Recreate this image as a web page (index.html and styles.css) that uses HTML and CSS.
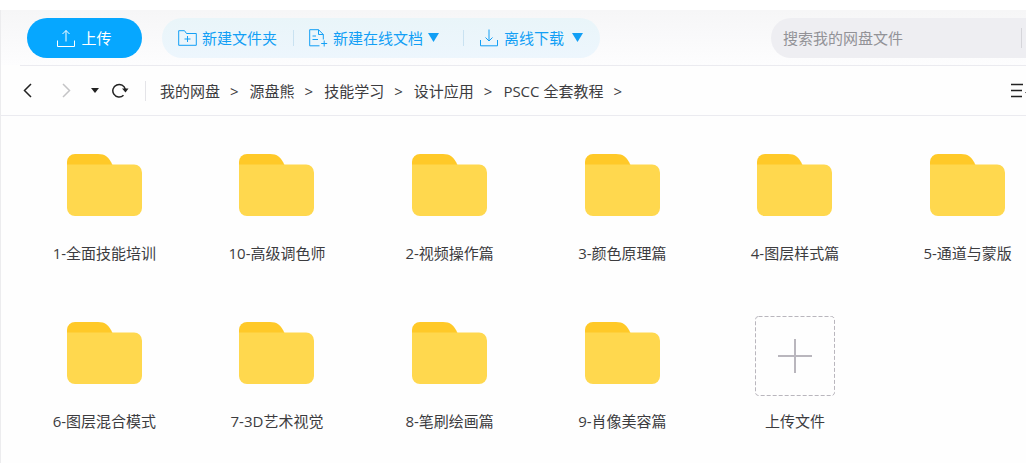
FILE: index.html
```html
<!DOCTYPE html>
<html lang="zh-CN">
<head>
  <meta charset="UTF-8" />
  <meta name="viewport" content="width=device-width, initial-scale=1.0"/>
  <title>我的网盘</title>
  <link rel="stylesheet" href="styles.css">
</head>
<body>
  <!-- Shared folder shape -->
  <svg class="defs" aria-hidden="true">
    <symbol id="folder" viewBox="0 0 75 62">
      <path fill="#ffc928" d="M0 30V8a8 8 0 0 1 8-8h23c7 0 11 3 14.500 11v19z"/>
      <path fill="#ffd84e" d="M0 10.500H67a8 8 0 0 1 8 8V54a8 8 0 0 1-8 8H8a8 8 0 0 1-8-8z"/>
    </symbol>
  </svg>

  <div class="app">
    <header class="toolbar">
      <button class="upload" type="button">
        <svg width="18" height="18" viewBox="0 0 18 18"><path d="M9 12.500V1.500M5.500 5L9 1.500 12.500 5M.5 11.500V17.500H17.500V11.500"/></svg>
        上传
      </button>
      <div class="actions">
        <button class="action" type="button">
          <svg width="19" height="16" viewBox="0 0 19 16"><path d="M.7 15.300V.7H6.500L8.500 3.500H18.300V15.300zM9.500 6V12M6.500 9H12.500"/></svg>
          新建文件夹
        </button>
        <span class="divider"></span>
        <button class="action" type="button">
          <svg width="19" height="18" viewBox="0 0 19 18"><path d="M10.500 16.800H.7V.7H9.500L14.300 5.500V10.500M9.500 .7V5.500H14.300M3.500 7H7M3.500 10.500H9M15.200 11.500V17.500M12.200 14.500H18.200"/></svg>
          新建在线文档
          <svg class="arrow" width="11" height="9" viewBox="0 0 11 9"><path d="M0 0H11L5.500 9z"/></svg>
        </button>
        <span class="divider wide"></span>
        <button class="action offline" type="button">
          <svg width="18" height="18" viewBox="0 0 18 18"><path d="M9 .5V12M5.500 8.500L9 12 12.500 8.500M.5 11V16.800H17.500V11"/></svg>
          离线下载
          <svg class="arrow" width="11" height="9" viewBox="0 0 11 9"><path d="M0 0H11L5.500 9z"/></svg>
        </button>
      </div>
      <form class="search">
        <input type="search" placeholder="搜索我的网盘文件" aria-label="搜索我的网盘文件">
        <button type="submit" aria-label="搜索"></button>
      </form>
    </header>
    <hr class="line">

    <nav class="pathbar">
      <button class="nav-btn back" type="button" aria-label="后退">
        <svg width="9" height="15" viewBox="0 0 9 15"><path d="M8 1L1.500 7.500 8 14"/></svg>
      </button>
      <button class="nav-btn forward" type="button" aria-label="前进">
        <svg width="9" height="15" viewBox="0 0 9 15"><path d="M1 1L7.500 7.500 1 14"/></svg>
      </button>
      <button class="nav-btn history" type="button" aria-label="历史">
        <svg width="8" height="5" viewBox="0 0 8 5"><path d="M0 0H8L4 5z"/></svg>
      </button>
      <button class="nav-btn refresh" type="button" aria-label="刷新">
        <svg width="17" height="15" viewBox="0 0 17 15"><path d="M11.500 12.300A6.300 6.300 0 1 1 13.300 6.500"/><path class="tip" d="M10 5.500H16.500L13.500 9.500z"/></svg>
      </button>
      <ol class="crumbs">
        <li><a href="#">我的网盘</a></li>
        <li><a href="#">源盘熊</a></li>
        <li><a href="#">技能学习</a></li>
        <li><a href="#">设计应用</a></li>
        <li><a href="#">PSCC 全套教程</a></li>
      </ol>
      <button class="nav-btn sort" type="button" aria-label="排序">
        <svg width="21" height="15" viewBox="0 0 21 15"><path d="M0 1.500H12M0 7.500H11M0 13.500H11"/><path class="tip" d="M14 9H20L17 13z"/></svg>
      </button>
    </nav>

    <main class="files">
      <a class="file" href="#"><svg class="folder"><use href="#folder"/></svg><span>1-全面技能培训</span></a>
      <a class="file" href="#"><svg class="folder"><use href="#folder"/></svg><span>10-高级调色师</span></a>
      <a class="file" href="#"><svg class="folder"><use href="#folder"/></svg><span>2-视频操作篇</span></a>
      <a class="file" href="#"><svg class="folder"><use href="#folder"/></svg><span>3-颜色原理篇</span></a>
      <a class="file" href="#"><svg class="folder"><use href="#folder"/></svg><span>4-图层样式篇</span></a>
      <a class="file" href="#"><svg class="folder"><use href="#folder"/></svg><span>5-通道与蒙版</span></a>
      <a class="file" href="#"><svg class="folder"><use href="#folder"/></svg><span>6-图层混合模式</span></a>
      <a class="file" href="#"><svg class="folder"><use href="#folder"/></svg><span>7-3D艺术视觉</span></a>
      <a class="file" href="#"><svg class="folder"><use href="#folder"/></svg><span>8-笔刷绘画篇</span></a>
      <a class="file" href="#"><svg class="folder"><use href="#folder"/></svg><span>9-肖像美容篇</span></a>
      <button class="file" type="button">
        <svg class="add" width="80" height="80" viewBox="0 0 80 80"><rect x=".5" y=".5" width="79" height="79" rx="3"/><path d="M40 23V57M23 40H57"/></svg>
        <span>上传文件</span>
      </button>
    </main>
  </div>
</body>
</html>
```
FILE: styles.css
```css
* {
  box-sizing: border-box;
}
body {
  margin: 0;
  padding-top: 10px;
  overflow: hidden;
  background: #fff;
  color: #3c3c3f;
  font-family: "Open Sans", "Noto Sans CJK SC", sans-serif;
  font-size: 15px;
  line-height: 20px;
}
button {
  margin: 0;
  padding: 0;
  border: none;
  background: none;
  color: inherit;
  font: inherit;
  cursor: pointer;
}
a {
  color: inherit;
  text-decoration: none;
}
svg {
  flex: none;
  fill: none;
  stroke: currentColor;
}
.defs {
  position: absolute;
  width: 0;
  height: 0;
}
/* The window is wider than the view, its right edge runs out of sight */
.app {
  min-height: calc(100vh - 10px);
  margin-right: -28px;
  border-left: 1px solid #ececee;
  background: #fefefe;
}

/* Top toolbar */
.toolbar {
  display: flex;
  align-items: center;
  height: 55px;
  padding-left: 26px;
  background: linear-gradient(#f6f6f7, #fdfdfe);
}
.line {
  height: 1px;
  margin: 0 0 0 19px;
  border: none;
  background: #ebebf0;
}
.upload {
  display: flex;
  align-items: center;
  justify-content: center;
  gap: 6px;
  width: 115px;
  height: 40px;
  border-radius: 20px;
  background: #06a7ff;
  color: #fff;
}
.actions {
  display: flex;
  align-items: center;
  height: 40px;
  margin-left: 20px;
  padding: 0 17px 0 16px;
  border-radius: 20px;
  background: linear-gradient(#e9f5f9, #edf6fd);
  color: #129ff5;
}
.action {
  display: flex;
  align-items: center;
  gap: 5px;
}
.arrow {
  fill: currentColor;
  stroke: none;
}
.offline {
  gap: 6px;
}
.offline .arrow {
  margin-left: 2px;
}
.divider {
  width: 1px;
  height: 16px;
  margin: 0 15px 0 16px;
  background: #c9e2f1;
}
.divider.wide {
  margin: 0 16px 0 24px;
}
.search {
  display: flex;
  align-items: center;
  width: 283px;
  height: 40px;
  margin-left: auto;
  border-radius: 20px 0 0 20px;
  background: #eeeef2;
}
.search input {
  flex: 1;
  min-width: 0;
  height: 40px;
  padding: 0 12px;
  border: none;
  outline: none;
  background: none;
  font: inherit;
}
.search input::placeholder {
  color: #929297;
}
.search button {
  width: 33px;
  height: 20px;
  border-left: 1px solid #d5d5da;
}

/* Navigation and path */
.pathbar {
  display: flex;
  align-items: center;
  height: 50px;
  padding: 0 22px;
  border-bottom: 1px solid #ebebf0;
}
.nav-btn {
  display: flex;
  color: #222;
}
.nav-btn svg {
  stroke-width: 1.5;
}
.nav-btn .tip,
.history svg {
  fill: currentColor;
  stroke: none;
}
.forward {
  margin-left: 30px;
  color: #c4c4c6;
}
.history {
  margin-left: 20px;
}
.refresh {
  margin-left: 13px;
}
.crumbs {
  display: flex;
  margin: 0 0 0 16px;
  padding: 0 0 0 14px;
  border-left: 1px solid #e4e4e8;
  list-style: none;
}
.crumbs li::after {
  content: ">";
  margin: 0 11px 0 10px;
}
.sort {
  margin-left: auto;
}

/* Folder grid */
.files {
  display: grid;
  grid-template-columns: repeat(6, 1fr);
  row-gap: 30px;
  padding: 32px 0 20px 17px;
}
.file {
  display: flex;
  flex-direction: column;
  align-items: center;
  justify-content: space-between;
  height: 138px;
  padding: 6px 0 23px;
}
button.file {
  padding-top: 0;
}
.folder {
  width: 75px;
  height: 62px;
  stroke: none;
}
.add {
  stroke: #b9b6bd;
}
.add rect {
  stroke-dasharray: 4 2;
}
.add path {
  stroke-width: 2;
}
```
